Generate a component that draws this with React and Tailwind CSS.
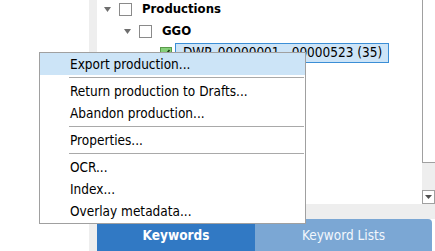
const font = "font-['DejaVu_Sans_Condensed','DejaVu_Sans',sans-serif]";

function Caret({ className }) {
  return (
    <svg width="7" height="5" viewBox="0 0 7 5" className={className}>
      <polygon points="0,0 7,0 3.5,5" fill="#6e6e6e" />
    </svg>
  );
}

function Box({ checked }) {
  if (checked) {
    return (
      <div className="w-[12px] h-[12px] border border-[#5a9a4a] bg-[#86d07a] flex items-center justify-center shrink-0">
        <svg width="10" height="10" viewBox="0 0 10 10">
          <path d="M2 5.5 L4 7.5 L8.5 2" stroke="#1d3d14" strokeWidth="1.6" fill="none" />
        </svg>
      </div>
    );
  }
  return <div className="w-[13px] h-[13px] border border-[#8a8a8a] bg-white shrink-0" />;
}

const menu = [
  { label: "Export production...", active: true },
  { sep: true },
  { label: "Return production to Drafts..." },
  { label: "Abandon production..." },
  { sep: true },
  { label: "Properties..." },
  { sep: true },
  { label: "OCR..." },
  { label: "Index..." },
  { label: "Overlay metadata..." },
];

function ContextMenu() {
  return (
    <div className="absolute left-[39px] top-[52px] w-[267px] bg-white border border-[#a0a0a0] flex flex-col pb-[1px]">
      {menu.map((m, i) =>
        m.sep ? (
          <div key={i} className="h-[5px] flex items-center pl-[29px] pr-[1px]">
            <div className="h-px w-full bg-[#a9a9a9]" />
          </div>
        ) : (
          <div
            key={i}
            className={
              "h-[22px] flex items-center pl-[30px] pt-[1px] text-[13.5px] text-black " +
              (m.active ? "bg-[#cce4f7]" : "")
            }
          >
            {m.label}
          </div>
        )
      )}
    </div>
  );
}

export default function App() {
  return (
    <div className={"relative w-[435px] h-[251px] overflow-hidden bg-white flex " + font}>
      <div className="w-[89px] bg-white" />
      <div className="w-[8px] bg-[#eeeeee]" />
      <div className="flex-1 flex flex-col">
        <div className="h-[204px] flex">
          <div className="flex-1 bg-white flex flex-col -mt-[2px]">
            <div className="h-[22px] flex items-center pl-[7px]">
              <Caret />
              <div className="w-[8px]" />
              <Box />
              <span className="ml-[10px] text-[13px] font-bold text-black">Productions</span>
            </div>
            <div className="h-[22px] flex items-center pl-[27px]">
              <Caret />
              <div className="w-[8px]" />
              <Box />
              <span className="ml-[10px] text-[13px] font-bold text-black">GGO</span>
            </div>
            <div className="h-[21px] flex items-center pl-[63px]">
              <Box checked />
              <div className="ml-[3px] h-[20px] w-[214px] border border-[#3b8ed6] bg-[#cde4f7] flex items-center pl-[7px] text-[13.5px] text-black whitespace-nowrap">
                DWP_00000001 - 00000523 (35)
              </div>
            </div>
          </div>
          <div className="w-[13px] flex flex-col bg-[#eeeeee]">
            <div className="h-[163px] bg-white border-l border-b border-[#a0a0a0]" />
            <div className="flex-1" />
            <div className="h-[14px] bg-white border border-[#a0a0a0] flex items-center justify-center">
              <svg width="7" height="4" viewBox="0 0 7 4">
                <polygon points="0,0 7,0 3.5,4" fill="#505050" />
              </svg>
            </div>
          </div>
        </div>
        <div className="h-[15px] bg-[#eeeeee]" />
        <div className="h-[32px] flex bg-white">
          <div className="w-[158px] bg-[#3179c4] flex items-center justify-center text-[13.5px] font-bold text-white">
            Keywords
          </div>
          <div className="w-[177px] bg-[#7ba7d4] rounded-tr-[4px] flex items-center justify-center text-[13.5px] text-[#f2f7fd]">
            Keyword Lists
          </div>
        </div>
      </div>
      <ContextMenu />
    </div>
  );
}
